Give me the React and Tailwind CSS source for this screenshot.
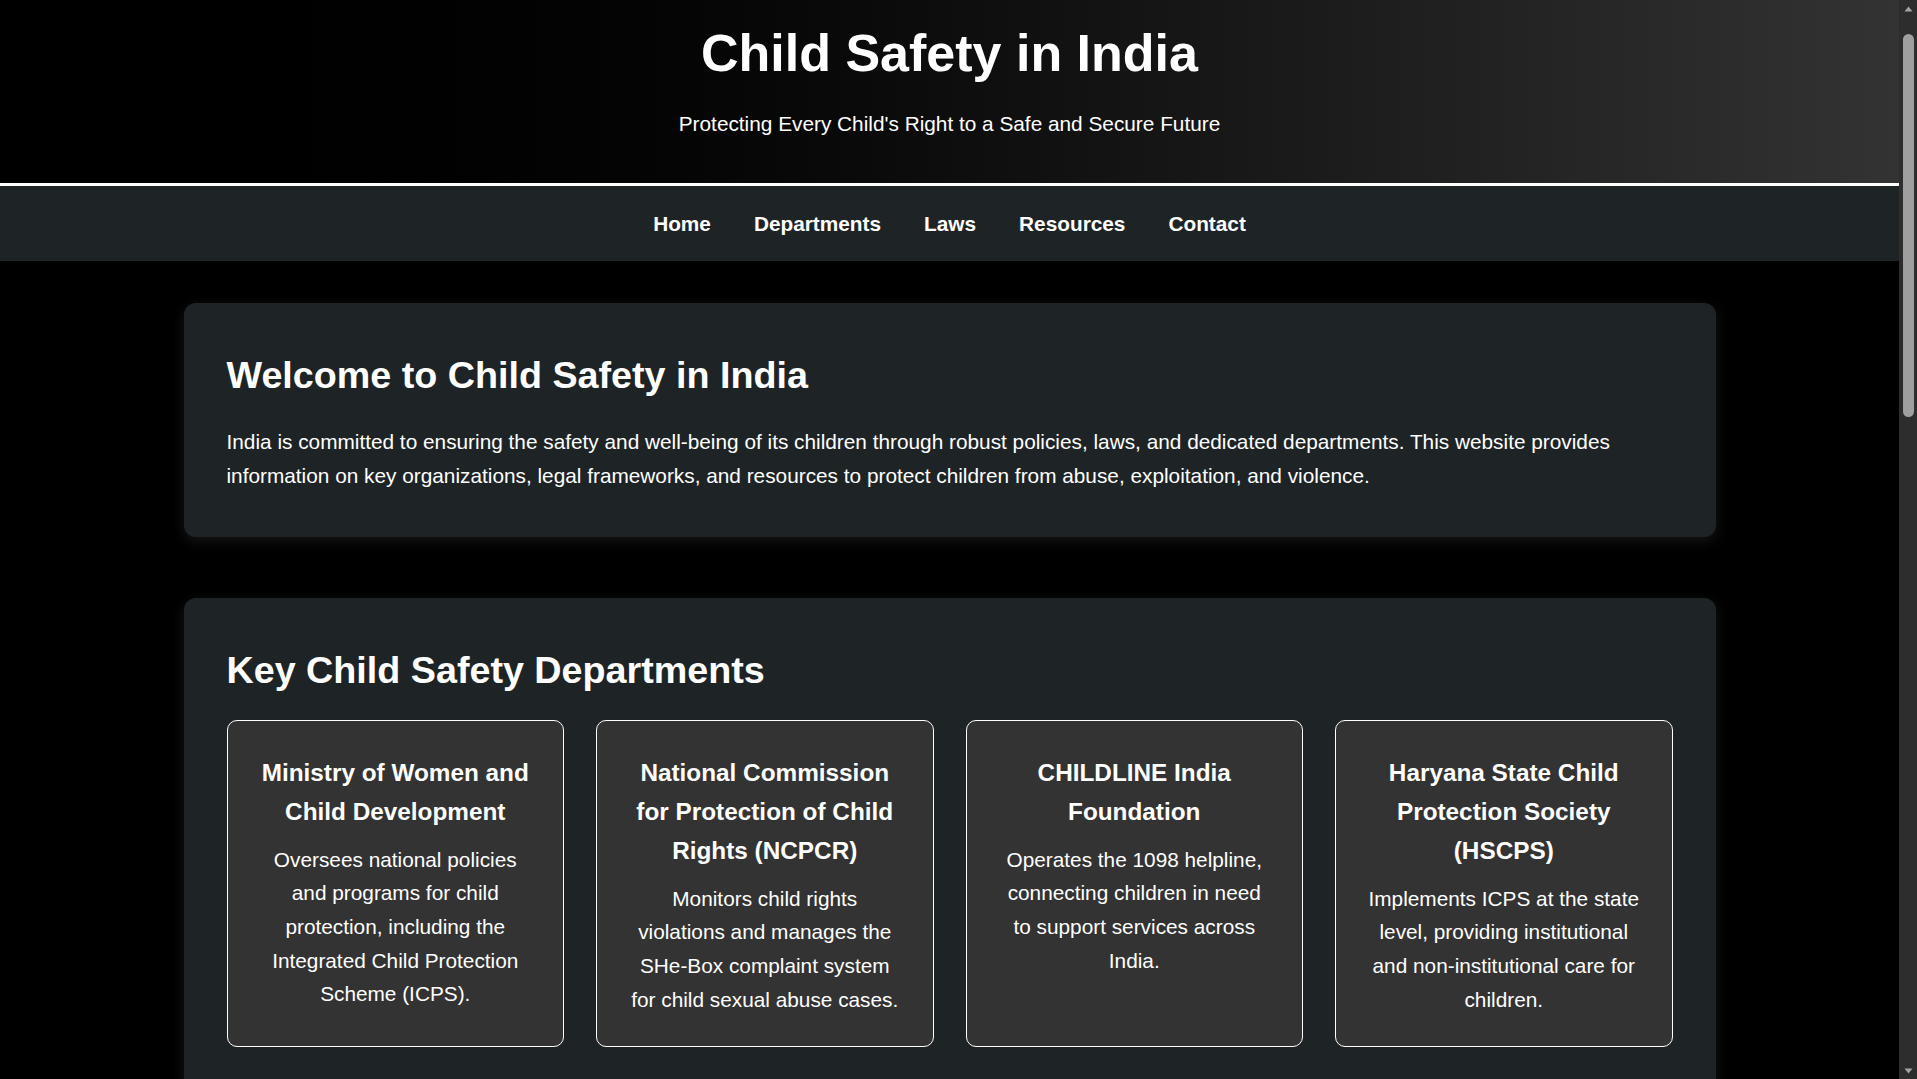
const depts = [
  {
    t: "Ministry of Women and Child Development",
    d: "Oversees national policies and programs for child protection, including the Integrated Child Protection Scheme (ICPS).",
  },
  {
    t: "National Commission for Protection of Child Rights (NCPCR)",
    d: "Monitors child rights violations and manages the SHe-Box complaint system for child sexual abuse cases.",
  },
  {
    t: "CHILDLINE India Foundation",
    d: "Operates the 1098 helpline, connecting children in need to support services across India.",
  },
  {
    t: "Haryana State Child Protection Society (HSCPS)",
    d: "Implements ICPS at the state level, providing institutional and non-institutional care for children.",
  },
];

const laws = [
  {
    t: "POCSO Act, 2012",
    d: "Protects children from sexual assault, sexual harassment and pornography, with special courts for speedy trials.",
  },
  {
    t: "Juvenile Justice Act, 2015",
    d: "Provides care, protection and rehabilitation for children in need and children in conflict with the law.",
  },
  {
    t: "Right to Education Act, 2009",
    d: "Guarantees free and compulsory education for every child between the ages of 6 and 14 years.",
  },
  {
    t: "Prohibition of Child Marriage Act, 2006",
    d: "Prohibits the marriage of girls below 18 years and boys below 21 years of age.",
  },
];

function Card({ t, d }) {
  return (
    <div className="bg-[#333333] border border-white rounded-[10px] pt-[33px] px-[32px] pb-[30px] text-center">
      <h3 className="text-[24.34px] leading-[38.9px] font-bold mb-[11px]">{t}</h3>
      <p className="text-[20.8px] leading-[33.6px]">{d}</p>
    </div>
  );
}

function Section({ title, children }) {
  return (
    <section className="bg-[#1e2426] rounded-[12px] shadow-[0_4px_14px_rgba(255,255,255,0.09)] pt-[51px] px-[43px] pb-[44px]">
      <h2 className="text-[37.7px] leading-[43px] font-bold mb-[28px]">{title}</h2>
      {children}
    </section>
  );
}

function Scrollbar() {
  return (
    <div className="w-[18px] shrink-0 h-full bg-[#2d2d2d] flex flex-col">
      <div className="h-[17px] flex items-center justify-center">
        <svg width="9" height="6" viewBox="0 0 9 6">
          <path d="M4.5 0.5 L8.5 5.5 L0.5 5.5 Z" fill="#a3a3a3" />
        </svg>
      </div>
      <div className="mt-[17px] ml-[4px] w-[11px] h-[383px] rounded-full bg-[#9f9f9f]" />
      <div className="flex-1" />
      <div className="h-[17px] flex items-center justify-center">
        <svg width="9" height="6" viewBox="0 0 9 6">
          <path d="M0.5 0.5 L8.5 0.5 L4.5 5.5 Z" fill="#a3a3a3" />
        </svg>
      </div>
    </div>
  );
}

export default function App() {
  return (
    <div className="flex h-screen overflow-hidden bg-black text-white font-['Liberation_Sans',Arial,Helvetica,sans-serif]">
      <div className="flex-1 min-w-0 h-full overflow-y-auto [scrollbar-width:none]">
        <header className="bg-linear-to-r from-black to-[#333333] border-b-[3px] border-white text-center pt-[23px] pb-[43px]">
          <h1 className="text-[52px] leading-[60px] font-bold">Child Safety in India</h1>
          <p className="mt-[24px] text-[20.8px] leading-[33px]">
            Protecting Every Child's Right to a Safe and Secure Future
          </p>
        </header>

        <nav className="bg-[#1e2426] py-[21px]">
          <ul className="flex justify-center gap-[43px] text-[20.8px] leading-[33px] font-bold">
            <li><a href="#home">Home</a></li>
            <li><a href="#departments">Departments</a></li>
            <li><a href="#laws">Laws</a></li>
            <li><a href="#resources">Resources</a></li>
            <li><a href="#contact">Contact</a></li>
          </ul>
        </nav>

        <main className="pt-[42px] pb-[62px]">
          <div className="max-w-[1532px] mx-auto flex flex-col gap-[61px]">
            <Section title="Welcome to Child Safety in India">
              <p className="text-[20.8px] leading-[34px]">
                India is committed to ensuring the safety and well-being of its children through robust policies, laws,
                and dedicated departments. This website provides information on key organizations, legal frameworks, and
                resources to protect children from abuse, exploitation, and violence.
              </p>
            </Section>

            <Section title="Key Child Safety Departments">
              <div className="grid grid-cols-4 gap-[32px]">
                {depts.map((c) => (
                  <Card key={c.t} t={c.t} d={c.d} />
                ))}
              </div>
            </Section>

            <Section title="Important Child Protection Laws">
              <div className="grid grid-cols-4 gap-[32px]">
                {laws.map((c) => (
                  <Card key={c.t} t={c.t} d={c.d} />
                ))}
              </div>
            </Section>

            <Section title="Resources and Helplines">
              <p className="text-[20.8px] leading-[34px]">
                In an emergency, call CHILDLINE 1098 (free, 24x7) or dial 112. Complaints about sexual offences against
                children can also be filed online through the NCPCR e-Box and the National Cyber Crime Reporting Portal.
              </p>
            </Section>
          </div>
        </main>

        <footer className="bg-[#1e2426] border-t-[3px] border-white text-center py-[30px] text-[18px] leading-[30px]">
          <p>© 2025 Child Safety in India. All rights reserved.</p>
        </footer>
      </div>
      <Scrollbar />
    </div>
  );
}
